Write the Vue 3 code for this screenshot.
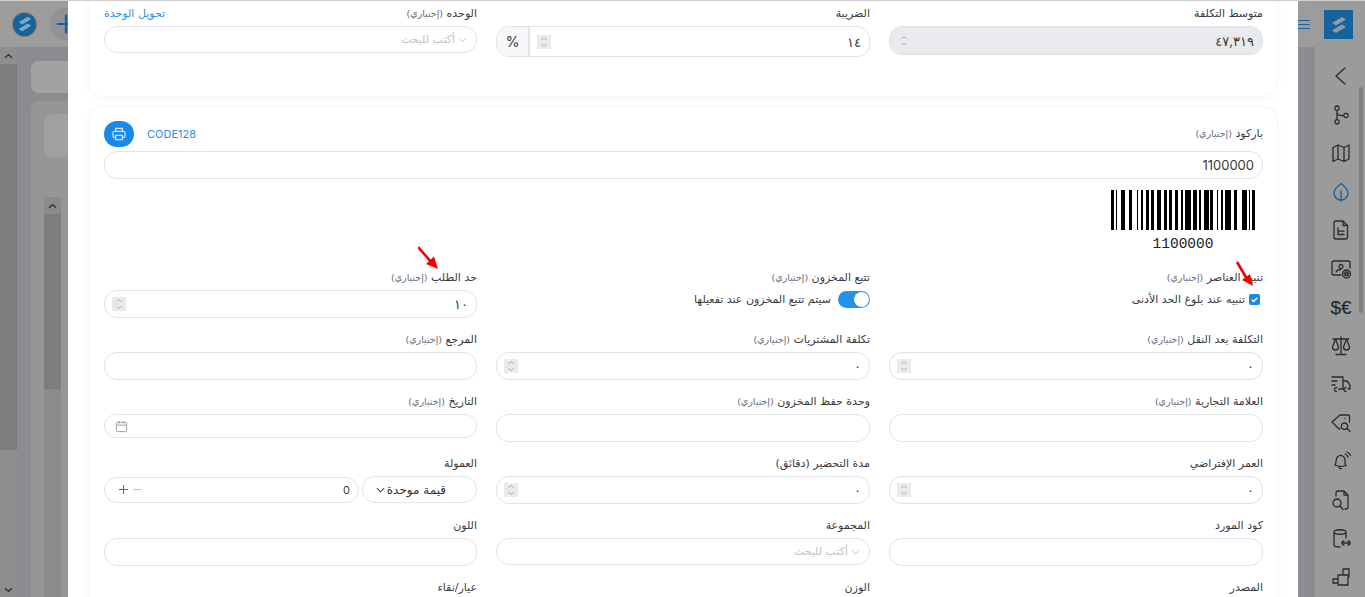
<template>
  <div class="screen">
    <!-- dimmed page, left of the modal -->
    <aside class="page-left">
      <div class="left-head">
        <span class="round-logo">
          <svg viewBox="0 0 24 24" width="22" height="22">
            <path d="M5 10 L15 4 L19 6.5 L9 12.5 Z" fill="#7fa6c4" />
            <path d="M19 14 L9 20 L5 17.5 L15 11.5 Z" fill="#7fa6c4" />
          </svg>
        </span>
        <span class="round-add">
          <svg viewBox="0 0 24 24" width="22" height="22"><path d="M12 2v20M2 12h20" stroke="#14639f" stroke-width="2.4" fill="none" /></svg>
        </span>
      </div>
      <div class="left-body">
        <div class="outer-scroll">
          <span class="arrow">
            <svg viewBox="0 0 10 6" width="9" height="6"><path d="M1 5l4-3.5L9 5" stroke="#333" stroke-width="1.6" fill="none" /></svg>
          </span>
          <div class="outer-thumb"></div>
          <span class="arrow arrow-end">
            <svg viewBox="0 0 10 6" width="9" height="6"><path d="M1 1l4 3.5L9 1" stroke="#333" stroke-width="1.6" fill="none" /></svg>
          </span>
        </div>
        <div class="left-main">
          <div class="tile"></div>
          <div class="panel">
            <div class="tile tile-inner"></div>
            <div class="inner-scroll">
              <span class="arrow">
                <svg viewBox="0 0 10 6" width="9" height="6"><path d="M1 5l4-3.5L9 5" stroke="#333" stroke-width="1.6" fill="none" /></svg>
              </span>
              <div class="inner-thumb"></div>
            </div>
          </div>
        </div>
      </div>
    </aside>

    <main class="modal" dir="rtl">
      <section class="card card-top">
        <div class="form-grid">
          <div class="field">
            <label class="lbl">متوسط التكلفة</label>
            <div class="ctl ctl-avg is-disabled">
              <input value="٤٧,٣١٩" readonly />
              <span class="spin spin-plain"><svg viewBox="0 0 10 14" width="10" height="14"><path d="M2.5 5L5 2.5 7.5 5M2.5 9L5 11.5 7.5 9" stroke="#a8a8a8" fill="none" /></svg></span>
            </div>
          </div>
          <div class="field">
            <label class="lbl">الضريبة</label>
            <div class="ctl ctl-tax">
              <input value="١٤" readonly />
              <span class="spin"><svg viewBox="0 0 10 14" width="10" height="14"><path d="M2.5 5L5 2.5 7.5 5M2.5 9L5 11.5 7.5 9" stroke="#a8a8a8" fill="none" /></svg></span>
              <span class="addon">%</span>
            </div>
          </div>
          <div class="field">
            <div class="lbl-row">
              <label class="lbl">الوحده <small>(إختياري)</small></label>
              <a class="link">تحويل الوحدة</a>
            </div>
            <div class="ctl ctl-select">
              <span class="chev"><svg viewBox="0 0 10 6" width="9" height="6"><path d="M1 1l4 4 4-4" stroke="#b5b5b5" fill="none" /></svg></span>
              <span class="ph">أكتب للبحث</span>
            </div>
          </div>
        </div>
      </section>

      <section class="card card-main">
        <div class="lbl-row barcode-head">
          <label class="lbl">باركود <small>(إختياري)</small></label>
          <div class="barcode-tools">
            <span class="code-name">CODE128</span>
            <button type="button" class="print-btn">
              <svg viewBox="0 0 24 24" width="16" height="16" fill="none" stroke="#cfe6fa" stroke-width="1.9">
                <path d="M7 8V3.5h10V8M7 17H4.5A1.5 1.5 0 0 1 3 15.5V10a2 2 0 0 1 2-2h14a2 2 0 0 1 2 2v5.5a1.5 1.5 0 0 1-1.5 1.5H17" />
                <path d="M7 14h10v6.5H7z" />
              </svg>
            </button>
          </div>
        </div>
        <div class="ctl"><input value="1100000" readonly /></div>
        <div class="barcode">
          <svg class="bars" viewBox="0 0 90 40" width="144" height="40" preserveAspectRatio="none">
            <rect v-for="(b, i) in bars" :key="i" :x="b.x" y="0" :width="b.w" height="40" fill="#000" />
          </svg>
          <div class="barcode-text">1100000</div>
        </div>

        <div class="form-grid">
          <div class="field">
            <label class="lbl">تنبيه العناصر <small>(إختياري)</small></label>
            <div class="check-line">
              <span class="check">
                <svg viewBox="0 0 12 12" width="11" height="11"><path d="M3 6.2l2 2 4-4.2" stroke="#fff" stroke-width="1.5" fill="none" /></svg>
              </span>
              <span>تنبيه عند بلوغ الحد الأدنى</span>
            </div>
          </div>
          <div class="field">
            <label class="lbl">تتبع المخزون <small>(إختياري)</small></label>
            <div class="check-line toggle-line">
              <span class="toggle"><i></i></span>
              <span>سيتم تتبع المخزون عند تفعيلها</span>
            </div>
          </div>
          <div class="field">
            <label class="lbl">حد الطلب <small>(إختياري)</small></label>
            <div class="ctl">
              <input value="١٠" readonly />
              <span class="spin"><svg viewBox="0 0 10 14" width="10" height="14"><path d="M2.5 5L5 2.5 7.5 5M2.5 9L5 11.5 7.5 9" stroke="#a8a8a8" fill="none" /></svg></span>
            </div>
          </div>

          <template v-for="f in fields" :key="f.label">
            <div class="field">
              <label class="lbl">{{ f.label }} <small v-if="f.optional">(إختياري)</small></label>

              <div v-if="f.type === 'date'" class="ctl ctl-date">
                <svg class="cal" viewBox="0 0 14 14" width="13" height="13" fill="none" stroke="#9a9a9a">
                  <rect x="1.5" y="2.5" width="11" height="10" rx="1" />
                  <path d="M1.5 5.5h11M4.5 1v3M9.5 1v3" />
                </svg>
              </div>

              <div v-else-if="f.type === 'commission'" class="commission">
                <div class="ctl ctl-unit">
                  <span class="unit-text">قيمة موحدة</span>
                  <svg viewBox="0 0 10 6" width="9" height="6"><path d="M1 1l4 4 4-4" stroke="#444" stroke-width="1.2" fill="none" /></svg>
                </div>
                <div class="ctl ctl-amount">
                  <input value="0" readonly />
                  <span class="steps"><b class="minus"></b><b class="plus"></b></span>
                </div>
              </div>

              <div v-else-if="f.type === 'select'" class="ctl ctl-select">
                <span class="chev"><svg viewBox="0 0 10 6" width="9" height="6"><path d="M1 1l4 4 4-4" stroke="#b5b5b5" fill="none" /></svg></span>
                <span class="ph">أكتب للبحث</span>
              </div>

              <div v-else class="ctl">
                <input :value="f.value || ''" readonly />
                <span v-if="f.type === 'number'" class="spin"><svg viewBox="0 0 10 14" width="10" height="14"><path d="M2.5 5L5 2.5 7.5 5M2.5 9L5 11.5 7.5 9" stroke="#a8a8a8" fill="none" /></svg></span>
              </div>
            </div>
          </template>
        </div>

        <svg class="red-arrow arrow-a" viewBox="0 0 24 30" width="24" height="30"><path d="M0 1 L14 17" stroke="#f20000" stroke-width="2.6" /><path d="M20 23 L8 18 L16 10.5 Z" fill="#f20000" /></svg>
        <svg class="red-arrow arrow-b" viewBox="0 0 24 30" width="24" height="30"><path d="M3 1 L13 18" stroke="#f20000" stroke-width="2.6" /><path d="M19 25 L8 19 L16 13 Z" fill="#f20000" /></svg>
      </section>
    </main>

    <!-- dimmed page, right of the modal -->
    <aside class="page-right">
      <div class="right-gutter">
        <div class="burger"><i></i><i></i><i></i></div>
      </div>
      <nav class="rail">
        <div class="rail-logo">
          <svg viewBox="0 0 24 24" width="24" height="24">
            <path d="M5 10 L15 4 L19 6.5 L9 12.5 Z" fill="#8f9aa3" />
            <path d="M19 14 L9 20 L5 17.5 L15 11.5 Z" fill="#8f9aa3" />
          </svg>
        </div>
        <div class="rail-icons">
          <span v-for="ic in railIcons" :key="ic.name" class="rail-item">
            <span v-if="ic.text" class="money">{{ ic.text }}</span>
            <svg v-else viewBox="0 0 24 24" width="24" height="24" fill="none" :stroke="ic.color || '#2b2b2b'" stroke-width="1.3" stroke-linecap="round" stroke-linejoin="round">
              <path :d="ic.d" />
            </svg>
          </span>
        </div>
        <div class="rail-thumb"></div>
      </nav>
    </aside>
  </div>
</template>

<script setup>
// code128: start C, 11, 00, 00, code B, "0", checksum, stop
const patterns = ["211232", "231212", "212222", "212222", "114131", "123122", "121142", "2331112"];

function buildBars() {
  const out = [];
  let x = 0;
  for (const p of patterns) {
    [...p].forEach((c, i) => {
      const w = Number(c);
      if (i % 2 === 0) out.push({ x, w });
      x += w;
    });
  }
  return out;
}
const bars = buildBars();

const fields = [
  { label: "التكلفة بعد النقل", optional: true, type: "number", value: "٠" },
  { label: "تكلفة المشتريات", optional: true, type: "number", value: "٠" },
  { label: "المرجع", optional: true },
  { label: "العلامة التجارية", optional: true },
  { label: "وحدة حفظ المخزون", optional: true },
  { label: "التاريخ", optional: true, type: "date" },
  { label: "العمر الإفتراضي", type: "number", value: "٠" },
  { label: "مدة التحضير (دقائق)", type: "number", value: "٠" },
  { label: "العمولة", type: "commission" },
  { label: "كود المورد" },
  { label: "المجموعة", type: "select" },
  { label: "اللون" },
  { label: "المصدر" },
  { label: "الوزن" },
  { label: "عيار/نقاء" },
];

const railIcons = [
  { name: "back", d: "M16 4L7 12l9 8" },
  { name: "branch", d: "M8 3a2.2 2.2 0 1 0 .01 0M8 7.4v9.200M8 16.600a2.2 2.2 0 1 0 .01 0M8 9.500c0 2 2 3 5 3h1.500M17 10.300a2.2 2.2 0 1 0 .01 0" },
  { name: "map", d: "M4 6.500l5-2.500 6 2.500 5-2.500v14l-5 2.500-6-2.500-5 2.500zM9 4v14M15 6.500v14" },
  { name: "leaf", color: "#14639f", d: "M12 3.500c3 2.500 7 5.500 7 9.500a7 7 0 0 1-14 0c0-4 4-7 7-9.500zM12 11v10" },
  { name: "doc", d: "M7 3h7l4.500 4.500V19a2 2 0 0 1-2 2H7a2 2 0 0 1-2-2V5a2 2 0 0 1 2-2zM14 3v4.500h4.500M9 10v6.500h6M9 13.200h6" },
  { name: "card", d: "M12 18H5a2 2 0 0 1-2-2V6a2 2 0 0 1 2-2h14a2 2 0 0 1 2 2v5M12 7.500a2 2 0 1 0 .01 0M7 15c1-2 3-2.500 5-2.500M17.500 13a4 4 0 1 0 .01 0M17.500 14.500l.8 1.500 1.500.2-1.100 1 .3 1.500-1.500-.8-1.500.8.3-1.500-1.100-1 1.500-.2z" },
  { name: "money", text: "$€" },
  { name: "scale", d: "M12 3v17M4 5h16M6.500 5L3.500 13a3 3 0 0 0 6 0zM17.500 5l-3 8a3 3 0 0 0 6 0zM7 20.500h10" },
  { name: "truck", d: "M3 5h11v12H9.500M14 9h4l3 4v4h-2M14 17h1M3 9h5M3 13h3M7.500 15.500a2 2 0 1 0 .01 4M17 15.500a2 2 0 1 0 .01 4" },
  { name: "tag", d: "M3 11l8-7h8a1.500 1.500 0 0 1 1.500 1.500V11M3 11l7 7 1-.8M16 7.500h.01M15.500 12a3.200 3.200 0 1 0 .01 0M18 17.500l3 3" },
  { name: "bell", d: "M6 16c1.500-2 .5-5 2-7.500 1.500-2 4-2.500 5.500-1.500s3 3 2.500 6c-.3 2 1 3.500 1 3.500S10 18.500 6 16zM10 18c0 1.500 1.500 2 2.500 1.500M16 5c1.500 .5 2.500 1.500 3 3M18 3c2 .8 3 2 3.500 3.500" },
  { name: "doc-search", d: "M7 8V5a2 2 0 0 1 2-2h6l4 4v12a2 2 0 0 1-2 2h-1M15 3v4h4M8 11a4 4 0 1 0 .01 0M11 18l3 3.500" },
  { name: "database", d: "M5 6c0-3 12-3 12 0v6M5 6c0 3 12 3 12 0M5 6v13c0 1.500 3 2 6 2M13 17h8M15 15a2 2 0 0 0 0 4M19 15a2 2 0 0 1 0 4" },
  { name: "blocks", d: "M4 14h5v-4h5V4h6v8h-1v8H9v-2H4zM9 14v4M14 10h5" },
];
</script>

<style>
html, body {
  margin: 0;
  height: 100%;
  overflow: hidden;
}
</style>

<style scoped>
.screen {
  display: flex;
  height: 597px;
  box-sizing: border-box;
  border-top: 1px solid #cfcfcf;
  overflow: hidden;
  background: #9a9a9a;
  font-family: "DejaVu Sans", "Noto Sans", sans-serif;
}

/* left of the modal */
.page-left {
  width: 68px;
  flex: none;
  display: flex;
  flex-direction: column;
}
.left-head {
  height: 46px;
  flex: none;
  display: flex;
  align-items: center;
  padding-left: 13px;
  gap: 14px;
  overflow: hidden;
  background: #9c9c9c;
  box-sizing: border-box;
}
.round-logo {
  width: 23px;
  height: 23px;
  flex: none;
  border-radius: 50%;
  background: #14639f;
  box-shadow: 0 0 0 1px #8a7a70;
  display: flex;
  align-items: center;
  justify-content: center;
}
.round-add {
  width: 32px;
  height: 32px;
  flex: none;
  border-radius: 50%;
  background: #909297;
  display: flex;
  align-items: center;
  justify-content: center;
}
.left-body {
  flex: 1;
  display: flex;
  background: #8b8c90;
  min-height: 0;
}
.outer-scroll {
  width: 17px;
  flex: none;
  background: #8e8e8e;
  display: flex;
  flex-direction: column;
}
.arrow {
  height: 17px;
  flex: none;
  display: flex;
  align-items: center;
  justify-content: center;
}
.arrow-end {
  margin-top: auto;
  height: 14px;
}
.outer-thumb {
  height: 386px;
  background: #7d7d7d;
}
.left-main {
  flex: 1;
  padding: 14px 0 0 14px;
  display: flex;
  flex-direction: column;
  gap: 8px;
}
.tile {
  height: 32px;
  flex: none;
  background: #a2a2a2;
  border-radius: 8px 0 0 8px;
}
.panel {
  flex: 1;
  background: #969696;
  border-radius: 8px 0 0 0;
  padding: 13px 0 0 13px;
  display: flex;
  flex-direction: column;
}
.tile-inner {
  height: 43px;
  margin-bottom: 40px;
  background: #a0a0a0;
}
.inner-scroll {
  width: 17px;
  flex: 1;
  background: #8b8b8b;
}
.inner-thumb {
  height: 175px;
  background: #7d7d7d;
}

/* modal */
.modal {
  width: 1230px;
  flex: none;
  background: #fff;
  padding: 0 22px;
  box-sizing: border-box;
  overflow: hidden;
  color: #333;
}
.card {
  position: relative;
  background: #fff;
  border-radius: 12px;
  padding: 0 13px 0 14px;
  box-shadow: 0 0 8px rgba(30, 30, 60, 0.06);
}
.card-top {
  margin-top: -30px;
  padding-top: 34px;
  height: 125px;
  box-sizing: border-box;
}
.card-main {
  margin-top: 12px;
  padding-top: 13px;
  padding-bottom: 40px;
}
.form-grid {
  display: grid;
  grid-template-columns: 374px 374px 373px;
  column-gap: 19px;
  row-gap: 13px;
}
.field {
  min-width: 0;
}
.lbl-row {
  display: flex;
  justify-content: space-between;
  align-items: center;
}
.lbl {
  display: block;
  height: 18px;
  line-height: 18px;
  margin-bottom: 3px;
  font-size: 11px;
  color: #3a3a40;
  white-space: nowrap;
}
.lbl small {
  font-size: 9.5px;
  color: #6c6c78;
}
.link {
  font-size: 11px;
  color: #2a8fe8;
  line-height: 18px;
  margin-bottom: 3px;
}

/* controls */
.ctl {
  height: 28px;
  box-sizing: border-box;
  display: flex;
  align-items: center;
  border: 1px solid #e1e3e9;
  border-radius: 13px;
  background: #fff;
  overflow: hidden;
}
.ctl input {
  flex: 1;
  min-width: 0;
  height: 100%;
  border: 0;
  outline: 0;
  padding: 0 8px;
  background: transparent;
  font-family: "Inter", "DejaVu Sans", sans-serif;
  font-size: 13px;
  color: #3a3a40;
  direction: rtl;
}
.ctl-avg {
  height: 29px;
}
.is-disabled {
  background: #e8eaed;
}
.spin {
  width: 14px;
  height: 14px;
  flex: none;
  margin: 0 7px;
  background: #e9e9ee;
  display: flex;
  align-items: center;
  justify-content: center;
}
.spin-plain {
  background: transparent;
}
.ctl-tax {
  height: 31px;
}
.addon {
  width: 33px;
  height: 100%;
  flex: none;
  box-sizing: border-box;
  border-right: 2px solid #e1e3e9;
  background: #f6f7f9;
  display: flex;
  align-items: center;
  justify-content: center;
  font-size: 14px;
  color: #333;
  font-family: "Inter", sans-serif;
}
.ctl-select {
  padding: 0 9px;
  gap: 3px;
  height: 27px;
}
.ph {
  font-size: 11px;
  color: #c2c2c2;
}
.chev {
  display: flex;
}
.ctl-date {
  height: 24px;
  justify-content: flex-end;
  padding-left: 10px;
}
.commission {
  display: flex;
  gap: 3px;
  align-items: center;
}
.ctl-unit {
  width: 115px;
  flex: none;
  height: 27px;
  padding: 0 30px 0 0;
  gap: 2px;
  justify-content: flex-start;
  font-size: 12px;
}
.unit-text {
  white-space: nowrap;
  color: #333;
}
.ctl-amount {
  flex: 1;
  min-width: 0;
  height: 26px;
}
.ctl-amount input {
  font-size: 11px;
}
.steps {
  display: flex;
  gap: 5px;
  margin-left: 14px;
  align-items: center;
}
.minus,
.plus {
  position: relative;
  display: block;
  width: 9px;
  height: 1px;
  background: #c7c7c7;
}
.plus {
  background: #666;
}
.plus::after {
  content: "";
  position: absolute;
  left: 4px;
  top: -4px;
  width: 1px;
  height: 9px;
  background: #666;
}

/* barcode */
.barcode-head {
  height: 26px;
  margin-bottom: 4px;
}
.barcode-head .lbl {
  margin-bottom: 0;
}
.barcode-tools {
  display: flex;
  align-items: center;
  gap: 13px;
  direction: rtl;
}
.code-name {
  font-family: "Inter", sans-serif;
  font-size: 11px;
  color: #2a8fe8;
}
.print-btn {
  width: 30px;
  height: 26px;
  padding: 0;
  border: 0;
  border-radius: 13px;
  background: #1a8ae8;
  display: flex;
  align-items: center;
  justify-content: center;
}
.barcode {
  width: 144px;
  margin: 11px 8px 0 0;
  direction: ltr;
}
.bars {
  display: block;
  shape-rendering: crispEdges;
}
.barcode-text {
  height: 34px;
  margin-top: 5px;
  line-height: 18px;
  text-align: center;
  font-family: "Liberation Mono", monospace;
  font-size: 14.5px;
  color: #222;
}
.check-line {
  display: flex;
  align-items: center;
  gap: 4px;
  height: 18px;
  font-size: 11px;
  color: #3a3a40;
  padding-right: 3px;
}
.toggle-line {
  gap: 7px;
  padding-right: 0;
}
.check {
  width: 11px;
  height: 11px;
  flex: none;
  border-radius: 2px;
  background: #1a8ae8;
  display: flex;
}
.toggle {
  width: 32px;
  height: 17px;
  flex: none;
  position: relative;
  border-radius: 9px;
  background: #2592ea;
}
.toggle i {
  position: absolute;
  right: 1px;
  top: 1px;
  width: 15px;
  height: 15px;
  border-radius: 50%;
  background: #fff;
}

/* annotation arrows drawn on the screenshot */
.red-arrow {
  position: absolute;
}
.arrow-a {
  left: 328px;
  top: 138px;
}
.arrow-b {
  left: 1144px;
  top: 153px;
}

/* right of the modal */
.page-right {
  width: 67px;
  flex: none;
  display: flex;
}
.right-gutter {
  width: 17px;
  flex: none;
  background: linear-gradient(#9c9c9c 46px, #8c8d91 46px);
}
.burger {
  width: 12px;
  margin-top: 19px;
  display: flex;
  flex-direction: column;
  gap: 3px;
}
.burger i {
  display: block;
  height: 1px;
  background: #14639f;
}
.rail {
  flex: 1;
  position: relative;
  background: #9b9b9b;
}
.rail-logo {
  width: 29px;
  height: 29px;
  margin: 9px 0 0 9px;
  background: #14639f;
  display: flex;
  align-items: center;
  justify-content: center;
}
.rail-icons {
  margin-top: 18px;
  display: flex;
  flex-direction: column;
  align-items: center;
  padding-left: 2px;
}
.rail-item {
  height: 38.5px;
  flex: none;
  display: flex;
  align-items: center;
  justify-content: center;
}
.money {
  font-family: "Liberation Sans", sans-serif;
  font-size: 19px;
  color: #222;
  line-height: 1;
}
.rail-thumb {
  position: absolute;
  top: 86px;
  right: 2px;
  width: 4px;
  height: 226px;
  border-radius: 2px;
  background: #818181;
}
</style>
